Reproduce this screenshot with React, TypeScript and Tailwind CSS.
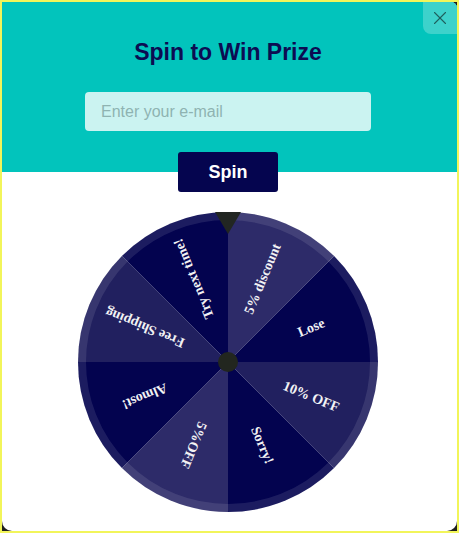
import { X } from 'lucide-react';

type Slice = { label: string; color: string };

const SLICES: Slice[] = [
  { label: '5% discount', color: '#2d2b69' },
  { label: 'Lose', color: '#03034f' },
  { label: '10% OFF', color: '#21205f' },
  { label: 'Sorry!', color: '#03034f' },
  { label: '5%OFF', color: '#2d2b69' },
  { label: 'Almost!', color: '#03034f' },
  { label: 'Free Shipping', color: '#21205f' },
  { label: 'Try next time!', color: '#03034f' },
];

const C = 150;
const R = 150;

function point(deg: number, r: number) {
  const a = (deg * Math.PI) / 180;
  return [C + r * Math.sin(a), C - r * Math.cos(a)];
}

function Wheel() {
  const step = 360 / SLICES.length;
  return (
    <svg width="300" height="300" viewBox="0 0 300 300" className="block">
      {SLICES.map((s, i) => {
        const [x1, y1] = point(i * step, R);
        const [x2, y2] = point((i + 1) * step, R);
        return <path key={s.label} d={`M${C} ${C} L${x1} ${y1} A${R} ${R} 0 0 1 ${x2} ${y2} Z`} fill={s.color} />;
      })}
      <circle cx={C} cy={C} r={R - 4} fill="none" stroke="rgba(255,255,255,0.1)" strokeWidth="8" />
      {SLICES.map((s, i) => {
        const mid = i * step + step / 2;
        const [tx, ty] = point(mid, 90);
        return (
          <text
            key={s.label + '-t'}
            x={tx}
            y={ty}
            fill="#f2f2f4"
            fontSize="14"
            fontWeight="700"
            fontFamily="'Liberation Serif', 'Times New Roman', serif"
            textAnchor="middle"
            dominantBaseline="central"
            transform={`rotate(${mid - 90} ${tx} ${ty})`}
          >
            {s.label}
          </text>
        );
      })}
      <circle cx={C} cy={C} r="10" fill="#22261f" />
      <path d="M137 0 L163 0 L150 22 Z" fill="#222622" />
    </svg>
  );
}

export default function App() {
  return (
    <div className="h-[533px] w-[459px] border-2 border-[#f2f55a] bg-[#1e1e1e]">
      <div className="relative flex h-full flex-col overflow-hidden rounded-b-[10px] rounded-tr-[6px] bg-white font-['Liberation_Sans',Arial,sans-serif]">
        <button className="absolute right-0 top-0 flex h-[32px] w-[34px] items-center justify-center rounded-bl-[8px] bg-[#3dd2cb] text-[#1f5f5c]">
          <X size={22} strokeWidth={1.2} />
        </button>
        <div className="flex h-[170px] flex-col items-center bg-[#02c4bc] pr-[3px] pt-[35px]">
          <h1 className="text-[23px] font-bold leading-[30px] text-[#0c0c52]">Spin to Win Prize</h1>
          <input
            placeholder="Enter your e-mail"
            className="mt-[25px] h-[39px] w-[286px] rounded-[4px] bg-[#cbf3f1] px-[16px] text-[16px] text-[#333] outline-none placeholder:text-[#8fb3b2]"
          />
        </div>
        <div className="flex flex-col items-center pr-[3px]">
          <button className="relative -mt-[20px] h-[40px] w-[100px] rounded-[3px] bg-[#05054f] text-[18px] font-bold text-white">
            Spin
          </button>
          <div className="mt-[20px]">
            <Wheel />
          </div>
        </div>
      </div>
    </div>
  );
}
